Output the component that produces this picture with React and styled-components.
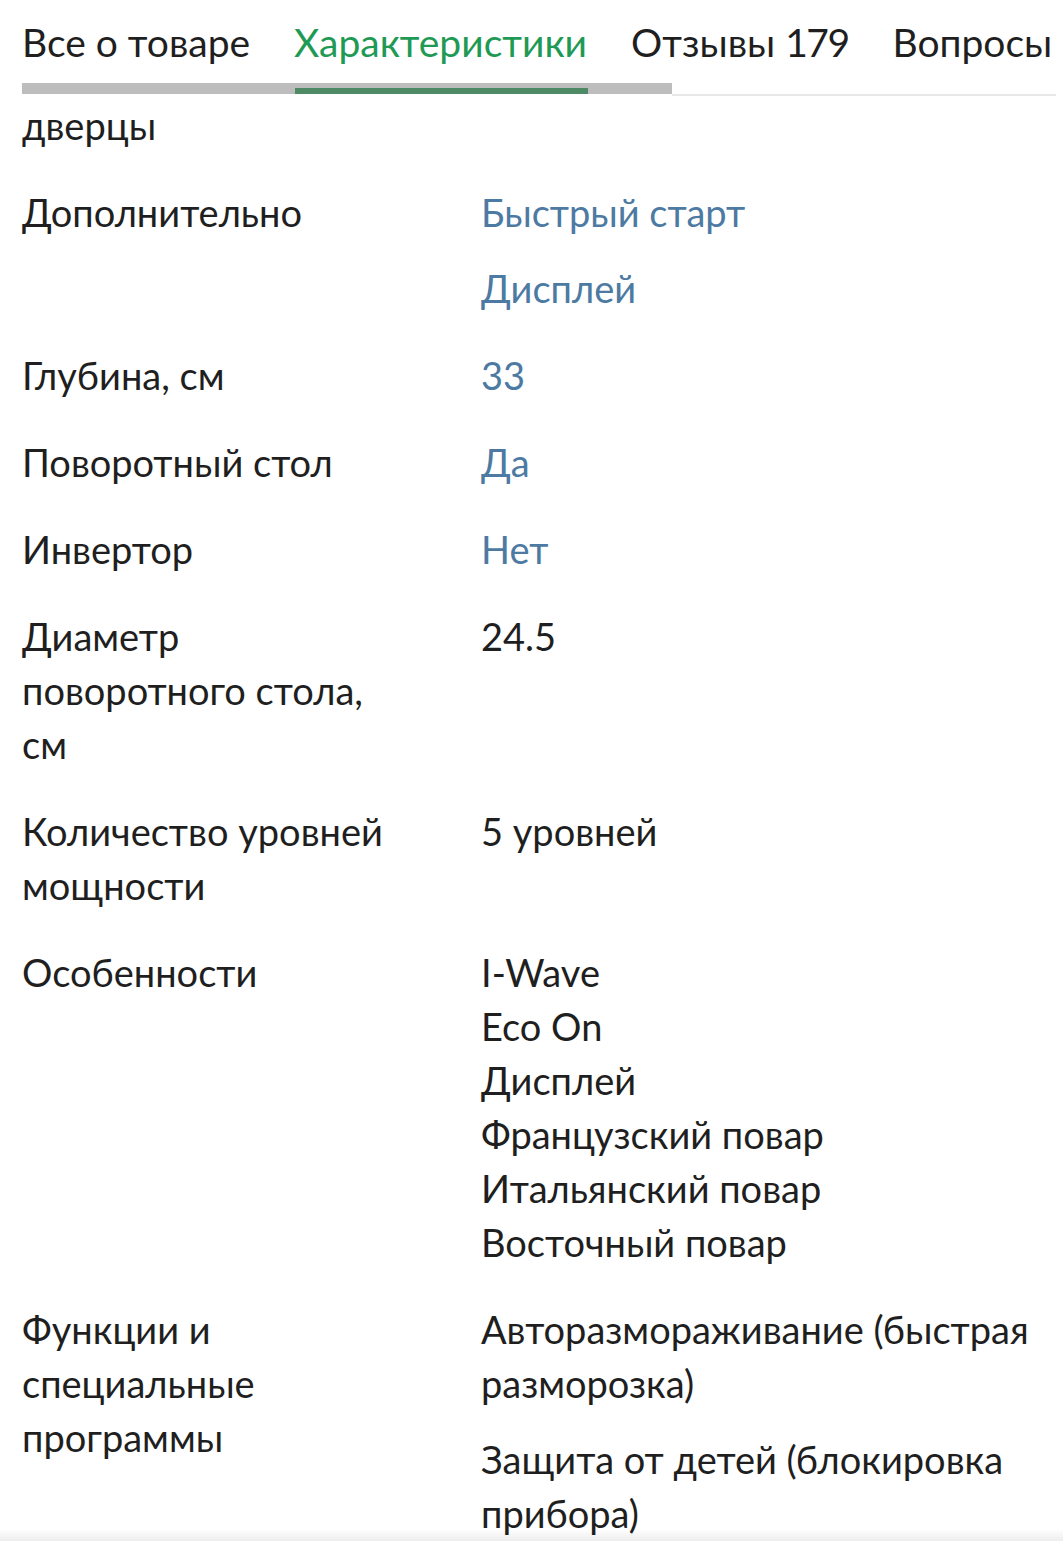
import React from "react";
import { styled, createGlobalStyle } from "styled-components";

const GlobalStyle = createGlobalStyle`
    body {
        margin: 0;
        background: #fff;
        font-family: Lato, "Open Sans", sans-serif;
        color: #1f1f1f;
    }
`;

const Page = styled.div`
    width: 1063px;
    min-height: 1541px;
    background: #fff;
    overflow: hidden;
    position: relative;
`;

const TabBar = styled.div`
    padding: 15px 0 0 22px;
    background: #fff;
`;

const Tabs = styled.div`
    display: flex;
    gap: 44px;
    white-space: nowrap;
    font-size: 39px;
    line-height: 54px;
`;

const Tab = styled.div`
    color: ${(p) => (p.$active ? "#1f9a55" : "#1f1f1f")};
`;

const Count = styled.span`
    letter-spacing: -1.5px;
`;

const Track = styled.div`
    display: flex;
    align-items: flex-end;
    margin-top: 14px;
    height: 13px;
`;

const Thumb = styled.div`
    width: 650px;
    height: 11px;
    margin-bottom: 2px;
    background: #bdbdbd;
    display: flex;
    align-items: flex-end;
`;

const Indicator = styled.div`
    margin-left: 273px;
    width: 293px;
    height: 6px;
    background: #4f8a66;
`;

const Rest = styled.div`
    flex: 1;
    height: 2px;
    margin-right: 7px;
    background: #e8e8e8;
`;

const Specs = styled.div`
    display: flex;
    flex-direction: column;
    gap: 33px;
    padding: 2px 14px 0 22px;
    font-size: 38px;
    line-height: 54px;
`;

const Row = styled.div`
    display: grid;
    grid-template-columns: 459px 1fr;
`;

const Label = styled.div`
    max-width: 378px;
`;

const Values = styled.div`
    display: flex;
    flex-direction: column;
    gap: ${(p) => (p.$tight ? "0" : "22px")};
`;

const Value = styled.div`
    color: ${(p) => (p.$link ? "#4d7aa2" : "#1f1f1f")};
`;

const BottomShade = styled.div`
    position: absolute;
    left: 0;
    right: 0;
    bottom: 0;
    height: 12px;
    background: linear-gradient(to bottom, rgba(0, 0, 0, 0), rgba(0, 0, 0, 0.07));
`;

const specs = [
    { label: "дверцы", values: [] },
    { label: "Дополнительно", values: ["Быстрый старт", "Дисплей"], link: true },
    { label: "Глубина, см", values: ["33"], link: true },
    { label: "Поворотный стол", values: ["Да"], link: true },
    { label: "Инвертор", values: ["Нет"], link: true },
    { label: "Диаметр поворотного стола, см", values: ["24.5"] },
    { label: "Количество уровней мощности", values: ["5 уровней"] },
    {
        label: "Особенности",
        values: ["I-Wave", "Eco On", "Дисплей", "Французский повар", "Итальянский повар", "Восточный повар"],
        tight: true,
    },
    {
        label: "Функции и специальные программы",
        values: ["Авторазмораживание (быстрая разморозка)", "Защита от детей (блокировка прибора)"],
    },
];

const App = () => {
    return (
        <Page>
            <GlobalStyle />
            <TabBar>
                <Tabs>
                    <Tab>Все о товаре</Tab>
                    <Tab $active>Характеристики</Tab>
                    <Tab>Отзывы <Count>179</Count></Tab>
                    <Tab>Вопросы 3</Tab>
                </Tabs>
                <Track>
                    <Thumb>
                        <Indicator />
                    </Thumb>
                    <Rest />
                </Track>
            </TabBar>
            <Specs>
                {specs.map((s) => (
                    <Row key={s.label}>
                        <Label>{s.label}</Label>
                        <Values $tight={s.tight}>
                            {s.values.map((v) => (
                                <Value key={v} $link={s.link}>{v}</Value>
                            ))}
                        </Values>
                    </Row>
                ))}
            </Specs>
            <BottomShade />
        </Page>
    );
};

export default App;
